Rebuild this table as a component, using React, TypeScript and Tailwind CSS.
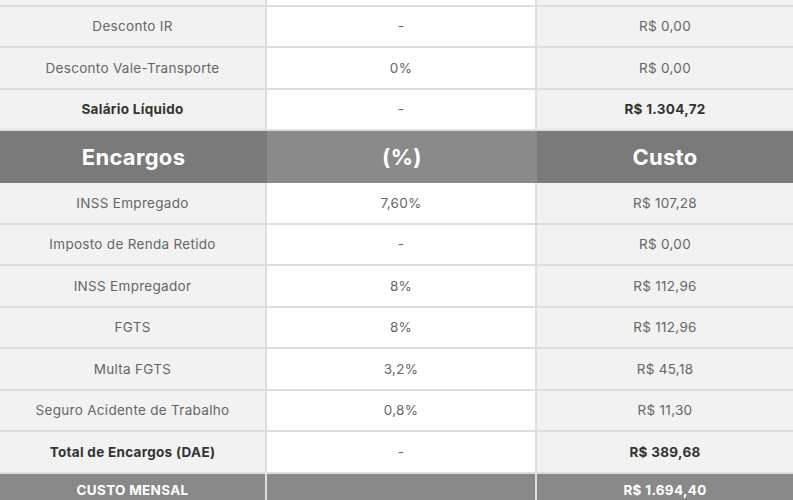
import React from "react";

type Row = { label: string; pct: string; value: string; bold?: boolean };

const topRows: Row[] = [
  { label: "Desconto IR", pct: "-", value: "R$ 0,00" },
  { label: "Desconto Vale-Transporte", pct: "0%", value: "R$ 0,00" },
  { label: "Salário Líquido", pct: "-", value: "R$ 1.304,72", bold: true },
];

const encargos: Row[] = [
  { label: "INSS Empregado", pct: "7,60%", value: "R$ 107,28" },
  { label: "Imposto de Renda Retido", pct: "-", value: "R$ 0,00" },
  { label: "INSS Empregador", pct: "8%", value: "R$ 112,96" },
  { label: "FGTS", pct: "8%", value: "R$ 112,96" },
  { label: "Multa FGTS", pct: "3,2%", value: "R$ 45,18" },
  { label: "Seguro Acidente de Trabalho", pct: "0,8%", value: "R$ 11,30" },
  { label: "Total de Encargos (DAE)", pct: "-", value: "R$ 389,68", bold: true },
];

const BodyRow = ({ row }: { row: Row }) => {
  const text = row.bold
    ? "font-bold text-[#333]"
    : "font-normal text-[#666]";
  return (
    <div className="flex h-[41.5px] border-b-2 border-[#dedede] text-[13.5px] tracking-[0.3px]">
      <div className={`flex w-[267px] items-center justify-center border-r-2 border-[#dedede] bg-[#f2f2f2] ${text}`}>
        {row.label}
      </div>
      <div className="flex w-[270px] items-center justify-center border-r-2 border-[#dedede] bg-white font-normal text-[#666]">
        {row.pct}
      </div>
      <div className={`flex flex-1 items-center justify-center bg-[#f2f2f2] ${text}`}>
        {row.value}
      </div>
    </div>
  );
};

export default function App() {
  return (
    <div
      className="h-[500px] w-[793px] overflow-hidden bg-white"
      style={{ fontFamily: "Inter, 'Open Sans', sans-serif" }}
    >
      {/* tail of the previous row */}
      <div className="flex h-[6.5px] border-b-2 border-[#dedede]">
        <div className="w-[267px] border-r-2 border-[#dedede] bg-[#f2f2f2]" />
        <div className="w-[270px] border-r-2 border-[#dedede] bg-white" />
        <div className="flex-1 bg-[#f2f2f2]" />
      </div>

      {topRows.map((r) => (
        <BodyRow key={r.label} row={r} />
      ))}

      <div className="flex h-[52px] text-[22px] font-bold tracking-[0.3px] text-white">
        <div className="flex w-[267px] items-center justify-center bg-[#7a7a7a]">Encargos</div>
        <div className="flex w-[270px] items-center justify-center bg-[#8a8a8a]">(%)</div>
        <div className="flex flex-1 items-center justify-center bg-[#7a7a7a]">Custo</div>
      </div>

      {encargos.map((r) => (
        <BodyRow key={r.label} row={r} />
      ))}

      <div className="flex h-[34px] bg-[#898989] text-[13.5px] font-bold tracking-[0.3px] text-white">
        <div className="flex w-[267px] items-center justify-center border-r-2 border-[#dedede]">
          CUSTO MENSAL
        </div>
        <div className="w-[270px] border-r-2 border-[#dedede]" />
        <div className="flex flex-1 items-center justify-center">R$ 1.694,40</div>
      </div>
    </div>
  );
}
